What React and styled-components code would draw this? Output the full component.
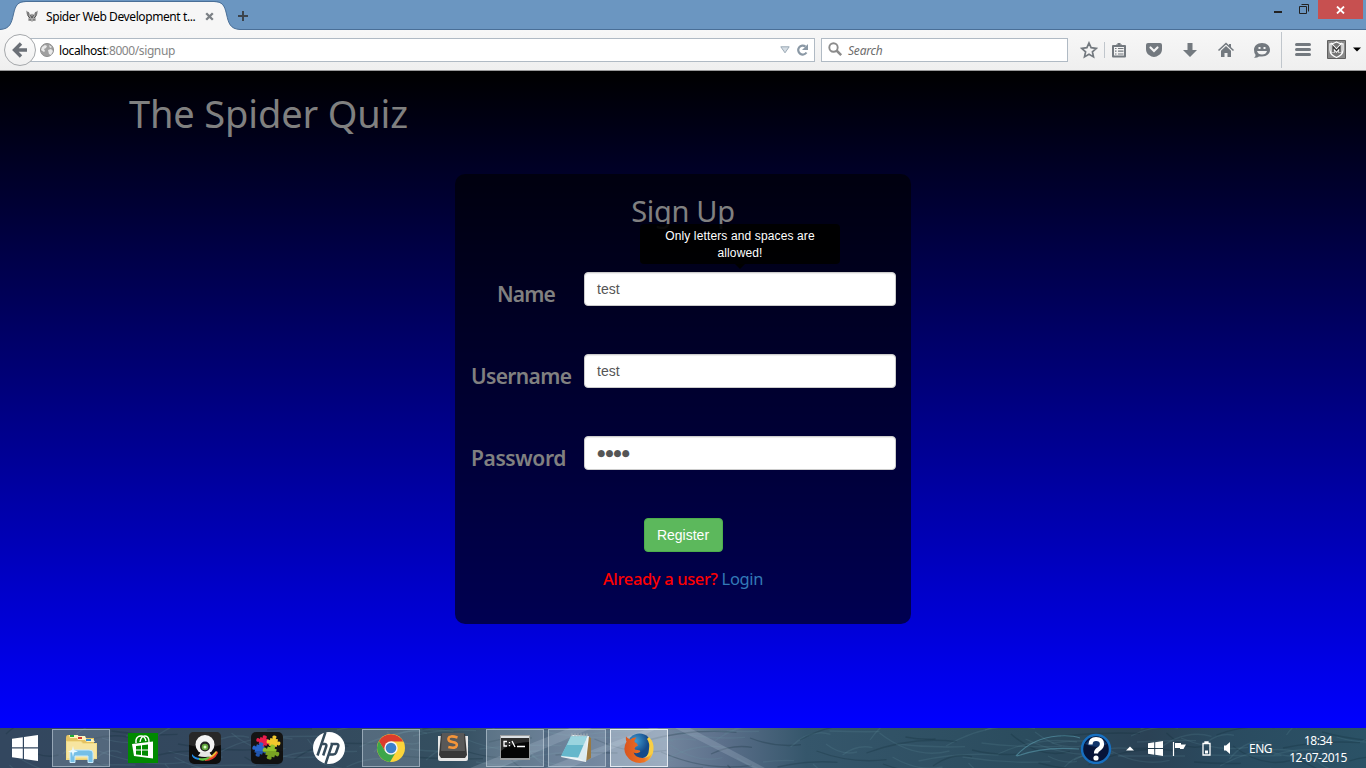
import React from "react";
import styled, { createGlobalStyle } from "styled-components";

const Global = createGlobalStyle`
  * { box-sizing: border-box; }
  body { margin: 0; background: #000; overflow: hidden; }
  svg { display: block; flex: none; }
`;

const ui = `"Noto Sans", "Open Sans", sans-serif`;

const Screen = styled.div`
  width: 1366px;
  height: 768px;
  display: flex;
  flex-direction: column;
  font-family: ${ui};
`;

/* ---------- browser chrome ---------- */
const TitleBar = styled.header`
  height: 30px;
  display: flex;
  background: linear-gradient(#6b96c1 0 29px, #4a6f97 29px);
`;
const Tab = styled.div`
  position: relative;
  width: 236px;
  height: 30px;
  display: flex;
  align-items: center;
  padding: 2px 0 0 25px;
`;
const TabShape = styled.svg`
  position: absolute;
  left: 0;
  top: 0;
`;
const TabTitle = styled.span`
  position: relative;
  width: 159px;
  margin-left: 7px;
  font-size: 12px;
  letter-spacing: -0.4px;
  color: #000;
  white-space: nowrap;
`;
const Layer = styled.svg`
  position: relative;
`;
const WindowControls = styled.div`
  margin-left: auto;
  display: flex;
  align-items: flex-start;
`;
const CloseButton = styled.div`
  width: 45px;
  height: 19px;
  margin-left: 9px;
  margin-right: 3px;
  display: flex;
  align-items: center;
  justify-content: center;
  background: #c75050;
`;

const Toolbar = styled.nav`
  height: 41px;
  display: flex;
  align-items: center;
  padding: 0 5px 1px 4px;
  background: linear-gradient(#f7f7f7, #efefef);
  border-bottom: 1px solid #999;
  color: #73797f;
`;
const BackButton = styled.div`
  position: relative;
  width: 32px;
  height: 32px;
  flex: none;
  display: flex;
  align-items: center;
  justify-content: center;
  border: 1px solid #a5a8ab;
  border-radius: 50%;
  background: linear-gradient(#fcfcfc, #f0f0f0);
`;
const Field = styled.div`
  height: 24px;
  width: ${(p) => p.$width}px;
  margin-left: ${(p) => p.$gap}px;
  padding: 0 5px 0 ${(p) => p.$pad}px;
  display: flex;
  align-items: center;
  background: #fff;
  border: 1px solid #b0bac4;
  font-size: 12px;
`;
const Url = styled.span`
  margin-left: 5px;
  padding-top: 2px;
  flex: 1;
  letter-spacing: -0.4px;
  color: #000;
  span { color: #858585; }
`;
const Placeholder = styled.span`
  margin-left: 5px;
  padding-top: 2px;
  font-style: italic;
  letter-spacing: -0.2px;
  color: #6d6d6d;
`;
const Tool = styled.svg`
  margin-left: ${(p) => p.$gap}px;
`;
const Separator = styled.i`
  width: 1px;
  height: ${(p) => p.$height}px;
  margin-left: ${(p) => p.$gap}px;
  background: #c0c6cc;
`;

/* ---------- page ---------- */
const Page = styled.main`
  height: 657px;
  padding: 17px 0 0 129px;
  background: linear-gradient(#000, #00f);
  color: #808080;
`;
const SiteTitle = styled.h1`
  margin: 0;
  height: 50px;
  line-height: 50px;
  font-size: 38px;
  font-weight: 400;
  letter-spacing: -0.15px;
`;
const Card = styled.section`
  width: 456px;
  height: 450px;
  margin: 36px 0 0 326px;
  padding: 17px 15px 0;
  border-radius: 10px;
  background: rgba(0, 0, 0, 0.62);
`;
const CardTitle = styled.h2`
  margin: 0 0 41px;
  height: 40px;
  line-height: 40px;
  font-size: 29px;
  font-weight: 400;
  letter-spacing: -0.3px;
  text-align: center;
`;
const FormRow = styled.div`
  position: relative;
  display: flex;
  height: 82px;
  padding-left: 1px;
`;
const Label = styled.label`
  width: 113px;
  padding-left: ${(p) => p.$indent || 0}px;
  line-height: 45px;
  font-size: 21px;
  font-weight: 600;
  letter-spacing: ${(p) => p.$track}px;
  white-space: nowrap;
`;
const Input = styled.div`
  width: 312px;
  height: 34px;
  padding: 0 12px;
  line-height: 32px;
  border: 1px solid #ccc;
  border-radius: 4px;
  background: #fff;
  box-shadow: inset 0 1px 1px rgba(0, 0, 0, 0.075);
  color: #555;
  font-family: ${(p) => (p.$masked ? `"DejaVu Sans"` : `"Liberation Sans"`)}, sans-serif;
  font-size: ${(p) => (p.$masked ? 9.2 : 14)}px;
  letter-spacing: ${(p) => (p.$masked ? "0.15px" : "0")};
`;
const Tooltip = styled.div`
  position: absolute;
  left: 170px;
  top: -48px;
  width: 200px;
  height: 40px;
  padding: 4px 8px;
  border-radius: 4px;
  background: rgba(0, 0, 0, 0.93);
  color: #fff;
  font: 12px/17px "Liberation Sans", sans-serif;
  letter-spacing: 0.13px;
  text-align: center;
  &::after {
    content: "";
    position: absolute;
    top: 40px;
    left: 95px;
    border: 5px solid transparent;
    border-bottom: 0;
    border-top-color: #000;
  }
`;
const Register = styled.button`
  display: block;
  width: 79px;
  height: 34px;
  margin: 0 auto;
  padding: 0;
  border: 1px solid #4cae4c;
  border-radius: 4px;
  background: #5cb85c;
  color: #fff;
  font: 14px "Liberation Sans", sans-serif;
`;
const LoginLine = styled.p`
  margin: 15px 0 0;
  line-height: 24px;
  font-size: 16.5px;
  letter-spacing: -0.35px;
  text-align: center;
  white-space: nowrap;
  b { font-weight: 500; color: #f00; }
  a { color: #337ab7; }
`;

/* ---------- taskbar ---------- */
const Taskbar = styled.footer`
  position: relative;
  height: 40px;
  display: flex;
  align-items: center;
  background: linear-gradient(90deg, #33475f, #33485d 20%, #344f60 33%, #586e88 42%, #71849c 49%, #5b6f8a 53%, #35566b 59%, #2b4c5e 75%, #2b4255 84%, #2a4b60 90%, #2b5266);
`;
const Texture = styled.svg`
  position: absolute;
  inset: 0;
`;
const Start = styled.div`
  position: relative;
  width: 52px;
  padding-left: 12px;
`;
const Apps = styled.div`
  position: relative;
  display: flex;
  gap: 4px;
`;
const TaskButton = styled.div`
  width: 58px;
  height: 38px;
  display: flex;
  align-items: center;
  justify-content: center;
  border: 1px solid ${(p) => (p.$active ? "#e3eaf1" : p.$open ? "rgba(205,218,230,.55)" : "transparent")};
  background: ${(p) => (p.$active ? "rgba(220,230,242,.42)" : p.$open ? "rgba(190,205,220,.24)" : "none")};
`;
const Tray = styled.div`
  position: relative;
  margin-left: auto;
  display: flex;
  align-items: center;
  height: 40px;
  padding-right: 18px;
  color: #fff;
  font-size: 12px;
`;
const Lang = styled.span`
  margin-left: 16px;
  width: 39px;
  letter-spacing: -0.5px;
`;
const Clock = styled.div`
  width: 60px;
  padding-top: 1px;
  line-height: 17px;
  letter-spacing: -0.5px;
  text-align: center;
  white-space: nowrap;
`;

const blades = Array.from({ length: 150 }, (_, i) => {
  const x = (i * 137.5 + (i % 7) * 31) % 1366;
  const y = (i * 23) % 44;
  const dx = 25 + ((i * 29) % 70);
  const dy = ((i * 37) % 56) - 28;
  return `M${x} ${y}q${dx / 2} ${dy} ${dx} ${dy / 1.5}`;
});

const WinLogo = () => (
  <svg width="26" height="26" viewBox="0 0 26 26">
    <path fill="#fff" d="M0 3.8 10.8 2.2V12.3H0zM12 2 26 0v12.3H12zM0 13.600h10.800v10.200L0 22.200zM12 13.600h14V26l-14-2z" />
  </svg>
);

const Icon = ({ children }) => (
  <svg width="32" height="32" viewBox="0 0 32 32">{children}</svg>
);

const Explorer = () => (
  <Icon>
    <path d="M1 6q0-3 2-3h8l2 3h16v22H1z" fill="#e4c262" />
    <path d="M4 3h9l1 3h-9zM11 4h9l2 4h-9zM19 7h9l2 3h-8z" fill="#fff3bd" />
    <path d="M5 3h4v2H5z" fill="#22ad35" /><path d="M13 5h4v2h-4z" fill="#d13a31" /><path d="M21 7h5v2h-5z" fill="#348ed1" />
    <path d="M1 9h15l2 2h14v16l-31 1z" fill="#f2dc87" />
    <path d="M2 10h14l2 2h13v14H2z" fill="#f7e5a0" />
    <path d="M5 30.500V21q0-3 4-3h15q4 0 4 3v9.500h-5V24H10v6.500z" fill="#76bfe6" stroke="#c8ebfd" />
    <path d="m8 14 1 4 4 1.500-4 1L8 25l-1-4.500-4-1L7 18z" fill="#eafaff" />
  </Icon>
);
const Store = () => (
  <Icon>
    <path d="M1 1h30v30H1z" fill="#008a00" />
    <path d="M9 11V8q1-4 5-4 4 0 5 5M13 10q1-6 5-6 4 0 4 6" fill="none" stroke="#fff" strokeWidth="1.400" />
    <path d="m5 12 21-2.500v17L7 24z" fill="#fff" />
    <path d="m9 14 5-.6v4.200H9zM15 13.300l6-.8v5.100h-6zM9 18.600h5V23l-5-.6zM15 18.600h6V24l-6-.8z" fill="#008a00" />
  </Icon>
);
const Webcam = () => (
  <Icon>
    <rect width="32" height="32" rx="5" fill="#0e0e0e" />
    <path d="M4 0h24q4 0 4 5v8Q16 18 0 13V5q0-5 4-5z" fill="#333" opacity=".7" />
    <path d="M16 27q8-1 12-8l1 2q-4 8-13 8z" fill="#e83b28" />
    <path d="M3 22q3 4 8 4l1 2q-7 0-9-4z" fill="#238de8" /><path d="M10 26q5 1 9-1l2 1q-5 4-11 2z" fill="#67c443" />
    <path d="M19 25q5-2 8-6l1 1q-3 5-7 6z" fill="#efbd31" />
    <circle cx="16" cy="12.500" r="9.500" fill="#f4f4f4" /><path d="M9 24q7 2 14 0l-3-4h-8z" fill="#e5e5e5" />
    <circle cx="16" cy="14.500" r="5" fill="#222" /><circle cx="16" cy="15" r="3.300" fill="#61a63b" /><circle cx="16" cy="15" r="1.500" fill="#d9ffc5" />
  </Icon>
);
const piece = "M-5-5h3q-2-4 2-4t2 4h3v3q4-2 4 2t-4 2v3H2q2 4-2 4t-2-4h-3V2q-4 2-4-2t4-2z";
const Puzzle = () => (
  <Icon>
    <rect width="32" height="32" rx="5" fill="#141414" />
    <g transform="translate(15.500 15)">
      <path d={piece} transform="translate(-3 -5.500) rotate(15) scale(.82 .7)" fill="#e81d4c" />
      <path d={piece} transform="translate(7 -4.500) rotate(10) scale(.78)" fill="#f1c72d" />
      <path d={piece} transform="translate(-7 2.500) rotate(18) scale(.82)" fill="#2765cc" />
      <path d={piece} transform="translate(4.500 5) rotate(18) scale(.95 .85)" fill="#8fc02a" />
    </g>
    <path d="M0 19h32v8q0 5-5 5H5q-5 0-5-5z" fill="#000" opacity=".15" />
  </Icon>
);
const Hp = () => (
  <Icon>
    <circle cx="16" cy="16" r="16" fill="#fff" />
    <path d="M12.500 0 4.500 23.500M8 12h3.500q2.500 0 1.700 2.500L10.200 23.500M19.500 11l-7 21M17.500 12h6q2.500 0 1.700 2.500l-2.100 6q-.8 2-3 2h-3.500" fill="none" stroke="#354b5b" strokeWidth="2.500" />
  </Icon>
);
const Chrome = () => (
  <Icon>
    <circle cx="16" cy="16" r="14" fill="#fbd43a" />
    <path d="M3.900 9A14 14 0 0 1 28.100 9.500H16L10 19z" fill="#db3b2d" />
    <path d="M3.900 9A14 14 0 0 0 15 30l6.500-11H10z" fill="#3da64a" />
    <circle cx="16" cy="16" r="6.700" fill="#f5f5f5" /><circle cx="16" cy="16" r="5.300" fill="#3b80cb" />
  </Icon>
);
const Sublime = () => (
  <Icon>
    <path d="M1 4h30v23q0 2-2 2H3q-2 0-2-2z" fill="#e7e7e7" />
    <path d="M4 2h24l2 21-2 3H4l-2-3z" fill="#393939" />
    <path d="M5 1h22l1 18H4z" fill="#585858" />
    <path d="M20.500 5.500q-8-2.500-9 .8-.7 3 4 3.700 5 .8 4.300 3.500-.8 3.500-8.500 1.500" fill="none" stroke="#f3953a" strokeWidth="2.600" />
  </Icon>
);
const Cmd = () => (
  <Icon>
    <path d="M1 3h30v25H1z" fill="#9b9ea0" /><path d="M2 4h28v2H2z" fill="#dce0e3" />
    <path d="M2 6h28v20H2z" fill="#050505" /><path d="M2 6h28v4Q10 11 2 19z" fill="#2c2c2c" />
    <path d="M8 9.500H5v4.500h3M10.500 10v1.200M10.500 13v1.200M13 9l3 6M18 14.500h8" fill="none" stroke="#fff" strokeWidth="1.300" />
  </Icon>
);
const Notepad = () => (
  <Icon>
    <path d="m27 4 3 2v20l-7 4z" fill="#9b7940" />
    <path d="m11 3 17 1-3 26L0 25z" fill="#edf4f6" />
    <path d="M10 4h16l-5 22L0 24z" fill="#65b7cb" /><path d="M10 4h16l-3 9H6z" fill="#9ad4df" />
    <path d="M11 1.500v3M14 1.500v3M17 1.500v3M20 1.500v3M23 1.500v3M26 1.500v3" stroke="#a9b3b8" />
    <path d="m26 5-1 25-8-4z" fill="#dcebf0" />
  </Icon>
);
const Firefox = () => (
  <Icon>
    <defs>
      <linearGradient id="fox" x1="0" x2="1"><stop stopColor="#d9541e" /><stop offset=".7" stopColor="#ee7424" /><stop offset="1" stopColor="#fbc63a" /></linearGradient>
      <radialGradient id="globe" cx=".35" cy=".3"><stop stopColor="#3f9cd2" /><stop offset="1" stopColor="#154a8a" /></radialGradient>
    </defs>
    <circle cx="16.500" cy="14" r="12.500" fill="url(#globe)" />
    <path d="M26 5q5 5 4.500 12Q30 29 17 30q9-5 9-13 1-6-2-10z" fill="#f9cf45" />
    <path d="M3 4.500q-.5 3 .5 5-4 7-.5 13.500 5 8 14 8 10-.5 12.500-10-4 5-10 5-7-.3-9-5.500 3 1.500 5.500 0 2-1 .8-2L12 17.500q-1.500-2 3-4-.5-2.500-3.500-3.500 0-2.500 2-4.500-4-.5-6 2Q4.500 6.500 3 4.500z" fill="url(#fox)" />
  </Icon>
);

const apps = [
  { icon: Explorer, open: true }, { icon: Store }, { icon: Webcam }, { icon: Puzzle }, { icon: Hp },
  { icon: Chrome, open: true }, { icon: Sublime }, { icon: Cmd, open: true }, { icon: Notepad, open: true },
  { icon: Firefox, active: true },
];

const Browser = () => (
  <>
    <TitleBar>
      <Tab>
        <TabShape width="240" height="30">
          <path d="M0 29.500C10 29 11.500 23 13.500 14 15.500 5 18 2 26 2H214C222 2 224.500 5 226.500 14 228.500 23 230 29 240 29.500V30H0z" fill="#f6f6f6" />
          <path d="M0 29.500C10 29 11.500 23 13.500 14 15.500 5 18 1.500 26 1.500H214C222 1.500 224.500 5 226.500 14 228.500 23 230 29 240 29.500" fill="none" stroke="#4a6f97" />
        </TabShape>
        <Layer width="14" height="14" viewBox="0 0 14 14">
          <path d="M1 1.500q3 1 4.500 4Q7 4 8.500 5.500 10 2.500 13 1.500q0 4-2.500 6.500l.5 4-2-1-2 2-2-2-2 1 .5-4Q1 5.500 1 1.500z" fill="#a5a5a5" />
          <path d="M3 3v4l2 2M11 3v4L9 9M5.500 6 7 9l1.500-3M5 10v2M9 10v2" fill="none" stroke="#555" />
        </Layer>
        <TabTitle>Spider Web Development t...</TabTitle>
        <Layer width="9" height="9" viewBox="0 0 9 9">
          <path d="m1.200 1.200 6.600 6.600m0-6.600L1.200 7.800" stroke="#7b8085" strokeWidth="2.300" />
        </Layer>
      </Tab>
      <svg width="14" height="30"><path d="M2 16h10M7 11v10" stroke="#3c444d" strokeWidth="2" /></svg>
      <WindowControls>
        <svg width="36" height="20">
          <path d="M1 12h8" stroke="#222" strokeWidth="2" />
          <path d="M26.500 6.500h7v7h-7zM28.500 4.500h7v7" fill="none" stroke="#222" />
        </svg>
        <CloseButton>
          <svg width="9" height="8"><path d="m1 .5 7 7m0-7-7 7" stroke="#fff" strokeWidth="1.800" /></svg>
        </CloseButton>
      </WindowControls>
    </TitleBar>
    <Toolbar>
      <BackButton>
        <svg width="16" height="16"><path d="M15 8H3M9 1.500 2.500 8 9 14.500" fill="none" stroke="#6b7077" strokeWidth="3.400" /></svg>
      </BackButton>
      <Field $width={786} $gap={-7} $pad={10}>
        <svg width="14" height="14" viewBox="0 0 14 14">
          <circle cx="7" cy="7" r="6.500" fill="#a0a0a0" stroke="#8c8c8c" />
          <path d="m2 4 3-2 2 1-1 2-2 1 1 2-1 1-3-2zM8 7l3-1 2 2-2 4-2-1zM9 2l3 2-2 1z" fill="#e9e9e9" />
        </svg>
        <Url>localhost<span>:8000/signup</span></Url>
        <svg width="10" height="8"><path d="M.8.800h8.400L5 6.800z" fill="#d5dde4" stroke="#9ba9b5" /></svg>
        <Tool $gap={6} width="13" height="14">
          <path d="M10.500 9.500A4.500 4.500 0 1 1 9.500 3.500" fill="none" stroke="#8a98a5" strokeWidth="2.200" />
          <path d="M12 1v6H6z" fill="#8a98a5" />
        </Tool>
      </Field>
      <Field $width={247} $gap={6} $pad={6}>
        <svg width="15" height="15"><circle cx="5.500" cy="5.500" r="4.200" fill="none" stroke="#8b8b8b" strokeWidth="1.900" /><path d="m8.500 8.500 4.700 4.700" stroke="#8b8b8b" strokeWidth="2.500" /></svg>
        <Placeholder>Search</Placeholder>
      </Field>
      <Tool $gap={12} width="18" height="18"><path d="m9 2 2.100 4.700 5.200.6-3.900 3.500 1.100 5.100L9 13.300l-4.500 2.600 1.100-5.100-3.900-3.500 5.200-.6z" fill="none" stroke="#73797f" strokeWidth="1.700" /></Tool>
      <Separator $gap={6} $height={16} />
      <Tool $gap={5} width="18" height="18">
        <path d="M3 5h12v10.500H3z" fill="none" stroke="#73797f" strokeWidth="2" strokeLinejoin="round" />
        <path d="M6 5V3.500h1.500V2h3v1.500H12V5z" fill="#73797f" />
        <path d="M5 7.500h1.500M8 7.500h5.500M5 10.200h1.500M8 10.200h5.500M5 13h1.500M8 13h5.500" stroke="#73797f" strokeWidth="1.200" />
      </Tool>
      <Tool $gap={17} width="18" height="18"><path d="M1 4q0-2 2-2h12q2 0 2 2v4q0 4-3 6-5 4-10 0-3-2-3-6z" fill="#73797f" /><path d="m5.500 6.500 3.500 3.500 3.500-3.500" fill="none" stroke="#f4f4f4" strokeWidth="2.200" strokeLinecap="round" /></Tool>
      <Tool $gap={18} width="18" height="18"><path d="M6.500 2h5v7H16l-7 7-7-7h4.500z" fill="#73797f" /></Tool>
      <Tool $gap={18} width="18" height="18"><path d="M1.500 9.500 9 2.500l7.500 7" fill="none" stroke="#73797f" strokeWidth="1.600" /><path d="m4 9.800 5-4.700 5 4.700V16h-3.500v-4h-3v4H4zM12 3h2v4l-2-2z" fill="#73797f" /></Tool>
      <Tool $gap={18} width="18" height="18"><path d="M9 2c5 0 8 3 8 6.800S14 15.500 9 15.500q-2 0-3 0-2 1.500-5 1.200 2-1.700 1.500-3Q1 12 1 8.800C1 5 4 2 9 2z" fill="#73797f" /><path d="M5.500 6h2v2h-2zM10.500 6h2v2h-2zM4 10h10q-1 3.500-5 3.500T4 10z" fill="#f4f4f4" /></Tool>
      <Separator $gap={10} $height={36} />
      <Tool $gap={12} width="18" height="18"><path d="M2.500 3.500h13M2.500 8.500h13M2.500 13.500h13" stroke="#73797f" strokeWidth="3" strokeLinecap="round" /></Tool>
      <Tool $gap={15} width="19" height="19"><path d="M.5.500h18v18H.5z" fill="#8a8a8a" stroke="#606060" /><path d="M3 4q3 0 6.500-2Q13 4 16 4v6q0 5-6.500 7.500Q3 15 3 10z" fill="#777" stroke="#fff" strokeWidth="1.300" /><path d="M6 13V6.500l3.500 4 3.500-4V13" fill="none" stroke="#fff" strokeWidth="3.200" /><path d="M6 12.500V6.500l3.500 4 3.500-4v6" fill="none" stroke="#333" strokeWidth="1.400" /></Tool>
      <Tool $gap={7} width="8" height="5"><path d="M0 .5h8l-4 4z" fill="#000" /></Tool>
    </Toolbar>
  </>
);

export default function App() {
  return (
    <Screen>
      <Global />
      <Browser />
      <Page>
        <SiteTitle>The Spider Quiz</SiteTitle>
        <Card>
          <CardTitle>Sign Up</CardTitle>
          <FormRow>
            <Label $indent={26} $track={-0.85}>Name</Label>
            <Input>test</Input>
            <Tooltip>Only letters and spaces are allowed!</Tooltip>
          </FormRow>
          <FormRow>
            <Label $track={-0.65}>Username</Label>
            <Input>test</Input>
          </FormRow>
          <FormRow>
            <Label $track={-0.4}>Password</Label>
            <Input $masked>●●●●</Input>
          </FormRow>
          <Register>Register</Register>
          <LoginLine><b>Already a user?</b> <a>Login</a></LoginLine>
        </Card>
      </Page>
      <Taskbar>
        <Texture width="1366" height="40">
          <g fill="none" strokeWidth="1.300">
            {blades.map((d, i) => (
              <path key={i} d={d} stroke={i % 3 ? "#6898a5" : "#102c36"} opacity={i % 3 ? 0.17 : 0.26} />
            ))}
          </g>
          <path d="M470 40 570 0h22L500 40zM545 40 650 0h9L570 40zM690 0l75 40h-12L675 0z" fill="#c8d6e8" opacity=".2" />
          <path d="M1016 28q16-18 42-20 14-1 22 2M1017 28q27-10 62-7" fill="none" stroke="#5c9caf" strokeWidth="1.200" opacity=".6" />
        </Texture>
        <Start><WinLogo /></Start>
        <Apps>
          {apps.map(({ icon: Glyph, open, active }, i) => (
            <TaskButton key={i} $open={open} $active={active}><Glyph /></TaskButton>
          ))}
        </Apps>
        <Tray>
          <svg width="32" height="32">
            <circle cx="16" cy="17" r="14" fill="#071438" stroke="#176fc0" strokeWidth="2.400" />
            <path d="M5 12Q16-1 27 12q-9 6-22 0z" fill="#1d559b" opacity=".5" />
            <path d="M10.500 12.500q0-5.500 5.500-5.500 6 0 6 5 0 3-3 5-3 1.500-3 4.500" fill="none" stroke="#fff" strokeWidth="4.200" /><circle cx="16" cy="26" r="2.600" fill="#fff" />
          </svg>
          <Tool $gap={14} width="8" height="5"><path d="m0 4.500 4-4 4 4z" fill="#fff" /></Tool>
          <Tool $gap={14} width="15" height="15" viewBox="0 0 26 26"><path fill="#fff" d="M0 3.800 10.800 2.200V12H0zM12.500 2 26 0v12H12.500zM0 14h10.800v10L0 22.200zM12.500 14H26v12l-13.500-2z" /></Tool>
          <Tool $gap={9} width="15" height="15"><path d="M1.500 1v14" stroke="#fff" strokeWidth="1.200" /><path d="M3 2h6v1.500h5L12.500 6l-1 2H8V7H3z" fill="#fff" /></Tool>
          <Tool $gap={15} width="9" height="15"><path d="M1 2.500h7V14H1zM3 1h3v1H3z" fill="none" stroke="#fff" strokeWidth="1.300" /><path d="M3 9.500h3v3H3z" fill="#fff" /></Tool>
          <Tool $gap={13} width="9" height="14"><path d="M0 4.500h2L6 1v12L2 9.500H0z" fill="#fff" /></Tool>
          <Lang>ENG</Lang>
          <Clock>18:34<br />12-07-2015</Clock>
        </Tray>
      </Taskbar>
    </Screen>
  );
}
